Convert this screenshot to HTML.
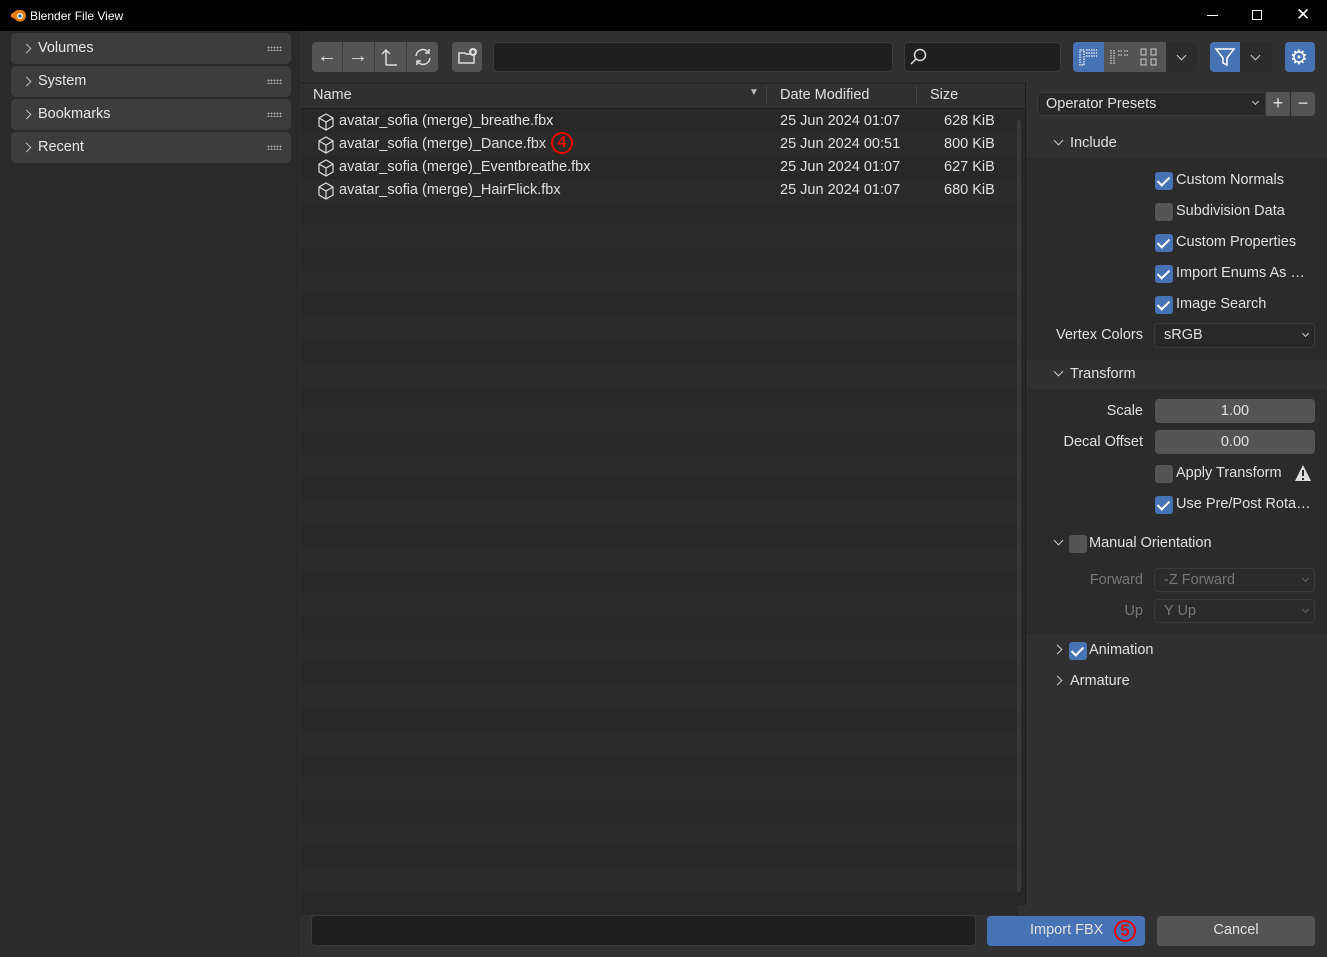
<!DOCTYPE html>
<html><head><meta charset="utf-8"><style>
*{box-sizing:border-box;margin:0;padding:0}
body{width:1327px;height:957px;background:#303030;font-family:"Liberation Sans","DejaVu Sans",sans-serif;font-size:14.5px;color:#e0e0e0;position:relative;overflow:hidden}
.a{position:absolute}
.title{left:0;top:0;width:1327px;height:31px;background:#000;color:#fff;font-size:12px}
.side{left:0;top:31px;width:300px;height:926px;background:#2a2a2a}
.si{left:11px;width:280px;height:31px;background:#3d3d3d;border-radius:5px;padding-left:27px;line-height:31px;color:#e6e6e6}
.si:before{content:"";position:absolute;left:12px;top:12px;width:6px;height:6px;border-right:1.3px solid #bbb;border-top:1.3px solid #bbb;transform:rotate(45deg)}
.dots{position:absolute;right:9px;top:13px;width:15px;height:5px;background-image:radial-gradient(#aaa 0.8px,transparent 0.9px);background-size:3px 3px}
.btn{background:#545454;border-radius:4px}
.row{left:301px;width:717px;height:23px}
.cb{width:18px;height:18px;border-radius:3px;background:#545454}
.cb.on{background:#4772b3}
.cb.on:after{content:"";position:absolute;left:5px;top:2px;width:5px;height:10px;border-right:2px solid #fff;border-bottom:2px solid #fff;transform:rotate(45deg)}
.rl{text-align:right;width:120px;left:1023px}
.fld{background:#282828;border:1px solid #3a3a3a;border-radius:4px}
.num{background:#545454;border-radius:4px;text-align:center;line-height:24px}
.chev{width:7px;height:7px;border-right:1.3px solid #ccc;border-bottom:1.3px solid #ccc;transform:rotate(45deg)}
.chr{width:7px;height:7px;border-right:1.3px solid #ccc;border-top:1.3px solid #ccc;transform:rotate(45deg)}
</style></head><body>
<div class="a title">
 <svg class="a" style="left:10px;top:8px" width="16" height="14" viewBox="0 0 16 14"><path d="M1 6 L7 2 L12 2 A6 6 0 1 1 5 11 L1 9 Z" fill="#e87d0d"/><circle cx="10" cy="8" r="3" fill="#fff"/><circle cx="10" cy="8" r="1.6" fill="#265787"/></svg>
 <span class="a" style="left:30px;top:9px">Blender File View</span>
 <div class="a" style="left:1207px;top:15px;width:11px;height:1px;background:#fff"></div>
 <div class="a" style="left:1252px;top:10px;width:10px;height:10px;border:1px solid #fff"></div>
 <span class="a" style="left:1296px;top:5px;font-size:17px">✕</span>
</div>
<div class="a side"></div>
<div class="a si" style="top:33px">Volumes<div class="dots"></div></div>
<div class="a si" style="top:66px">System<div class="dots"></div></div>
<div class="a si" style="top:99px">Bookmarks<div class="dots"></div></div>
<div class="a si" style="top:132px">Recent<div class="dots"></div></div>

<div class="a btn" style="left:312px;top:42px;width:126px;height:30px"></div>
<div class="a" style="left:342px;top:42px;width:1px;height:30px;background:#3a3a3a"></div>
<div class="a" style="left:374px;top:42px;width:1px;height:30px;background:#3a3a3a"></div>
<div class="a" style="left:406px;top:42px;width:1px;height:30px;background:#3a3a3a"></div>
<span class="a" style="left:317px;top:45px;font-size:20px;color:#ddd">←</span>
<span class="a" style="left:348px;top:45px;font-size:20px;color:#ddd">→</span>
<svg class="a" style="left:381px;top:47px" width="18" height="20"><path d="M5 18V3M1 7L5 3L9 7M5 18H16" fill="none" stroke="#ddd" stroke-width="1.5"/></svg>
<svg class="a" style="left:413px;top:47px" width="20" height="20"><path d="M3 9A7 7 0 0 1 16 6M17 11A7 7 0 0 1 4 14M16 2V6H12M4 18V14H8" fill="none" stroke="#ddd" stroke-width="1.5"/></svg>
<div class="a btn" style="left:452px;top:42px;width:30px;height:30px"></div>
<svg class="a" style="left:457px;top:46px" width="22" height="20"><path d="M2 7H8L9 8H17V17H2Z" fill="none" stroke="#ddd" stroke-width="1.5"/><circle cx="16" cy="6" r="4" fill="#ddd"/><path d="M16 4V8M14 6H18" stroke="#444" stroke-width="1.3"/></svg>
<div class="a fld" style="left:493px;top:42px;width:400px;height:30px;background:#1f1f1f"></div>
<div class="a fld" style="left:904px;top:42px;width:157px;height:30px;background:#1f1f1f"></div>
<svg class="a" style="left:909px;top:47px" width="20" height="20"><circle cx="11" cy="8" r="5.5" fill="none" stroke="#ddd" stroke-width="1.5"/><path d="M7 12L2 17" stroke="#ddd" stroke-width="1.5"/></svg>
<div class="a" style="left:1073px;top:42px;width:124px;height:30px;background:#545454;border-radius:4px"></div>
<div class="a" style="left:1073px;top:42px;width:31px;height:30px;background:#4772b3;border-radius:4px 0 0 4px"></div>
<div class="a" style="left:1166px;top:42px;width:31px;height:30px;background:#2c2c2c;border-radius:0 4px 4px 0"></div>
<svg class="a" style="left:1078px;top:47px" width="24" height="20"><path d="M2 3h4v15h-4zM8 3h11M8 6h11M8 9h11" fill="none" stroke="#fff" stroke-width="1.2" stroke-dasharray="1.5 1"/></svg>
<svg class="a" style="left:1108px;top:47px" width="24" height="20"><path d="M3 3v15M6 3v15M10 4h4M10 8h4M16 4h4M16 8h4" fill="none" stroke="#ccc" stroke-width="1.2" stroke-dasharray="1.5 1"/></svg>
<svg class="a" style="left:1139px;top:47px" width="22" height="20"><rect x="2" y="2" width="5" height="6" fill="none" stroke="#ccc"/><rect x="12" y="2" width="5" height="6" fill="none" stroke="#ccc"/><rect x="2" y="12" width="5" height="6" fill="none" stroke="#ccc"/><rect x="12" y="12" width="5" height="6" fill="none" stroke="#ccc"/></svg>
<div class="a chev" style="left:1178px;top:52px"></div>
<div class="a" style="left:1210px;top:42px;width:62px;height:30px;background:#2c2c2c;border-radius:4px"></div>
<div class="a" style="left:1210px;top:42px;width:30px;height:30px;background:#4772b3;border-radius:4px 0 0 4px"></div>
<svg class="a" style="left:1213px;top:46px" width="24" height="22"><path d="M3 3H21L14 12V19L10 17V12Z" fill="none" stroke="#fff" stroke-width="1.5"/></svg>
<div class="a chev" style="left:1252px;top:52px"></div>
<div class="a" style="left:1285px;top:42px;width:30px;height:30px;background:#4772b3;border-radius:4px"></div>
<span class="a" style="left:1290px;top:45px;font-size:20px;color:#fff">⚙</span>

<div class="a" style="left:301px;top:82px;width:725px;height:823px;background:#282828"></div>
<div class="a" style="left:301px;top:84px;width:725px;height:24px;background:#303030"></div>
<span class="a" style="left:313px;top:87px">Name</span>
<span class="a" style="left:749px;top:87px;font-size:10px;color:#bbb">▼</span>
<div class="a" style="left:766px;top:86px;width:1px;height:18px;background:#444"></div>
<span class="a" style="left:780px;top:87px">Date Modified</span>
<div class="a" style="left:916px;top:86px;width:1px;height:18px;background:#444"></div>
<span class="a" style="left:930px;top:87px">Size</span>
<div class="a" style="left:301px;top:108px;width:725px;height:1px;background:#1e1e1e"></div>
<div id="rows"></div>
<div class="a" style="left:1017px;top:120px;width:4px;height:772px;background:#3a3a3a;border-radius:2px"></div>
<div class="a" style="left:1025px;top:82px;width:1px;height:823px;background:#1e1e1e"></div>

<div class="a" style="left:1026px;top:82px;width:301px;height:823px;background:#303030"></div>
<div class="a fld" style="left:1037px;top:92px;width:229px;height:24px;line-height:22px;padding-left:8px;background:#282828">Operator Presets</div>
<div class="a chev" style="left:1253px;top:99px;width:5px;height:5px"></div>
<div class="a num" style="left:1266px;top:92px;width:24px;height:24px;font-size:18px;line-height:23px;border-radius:0">+</div>
<div class="a num" style="left:1291px;top:92px;width:24px;height:24px;font-size:18px;line-height:22px;border-radius:0 4px 4px 0">−</div>

<div class="a" style="left:1026px;top:158px;width:301px;height:202px;background:#2b2b2b"></div>
<div class="a chev" style="left:1055px;top:137px"></div><span class="a" style="left:1070px;top:135px">Include</span>
<div class="a cb on" style="left:1155px;top:172px"></div><span class="a" style="left:1176px;top:172px">Custom Normals</span>
<div class="a cb" style="left:1155px;top:203px"></div><span class="a" style="left:1176px;top:203px">Subdivision Data</span>
<div class="a cb on" style="left:1155px;top:234px"></div><span class="a" style="left:1176px;top:234px">Custom Properties</span>
<div class="a cb on" style="left:1155px;top:265px"></div><span class="a" style="left:1176px;top:265px">Import Enums As …</span>
<div class="a cb on" style="left:1155px;top:296px"></div><span class="a" style="left:1176px;top:296px">Image Search</span>
<span class="a rl" style="top:327px">Vertex Colors</span>
<div class="a fld" style="left:1154px;top:323px;width:161px;height:25px;line-height:23px;padding-left:9px">sRGB</div>
<div class="a chev" style="left:1303px;top:331px;width:5px;height:5px"></div>

<div class="a" style="left:1026px;top:389px;width:301px;height:245px;background:#2b2b2b"></div>
<div class="a chev" style="left:1055px;top:368px"></div><span class="a" style="left:1070px;top:366px">Transform</span>
<span class="a rl" style="top:403px">Scale</span>
<div class="a num" style="left:1155px;top:399px;width:160px;height:24px">1.00</div>
<span class="a rl" style="top:434px">Decal Offset</span>
<div class="a num" style="left:1155px;top:430px;width:160px;height:24px">0.00</div>
<div class="a cb" style="left:1155px;top:465px"></div><span class="a" style="left:1176px;top:465px">Apply Transform</span>
<svg class="a" style="left:1294px;top:464px" width="18" height="18"><path d="M9 1L17 17H1Z" fill="#ddd"/><path d="M9 6V12M9 14V16" stroke="#2b2b2b" stroke-width="2"/></svg>
<div class="a cb on" style="left:1155px;top:496px"></div><span class="a" style="left:1176px;top:496px">Use Pre/Post Rota…</span>
<div class="a chev" style="left:1055px;top:537px"></div>
<div class="a cb" style="left:1069px;top:535px"></div><span class="a" style="left:1089px;top:535px">Manual Orientation</span>
<span class="a rl" style="top:572px;color:#777">Forward</span>
<div class="a fld" style="left:1154px;top:568px;width:161px;height:24px;line-height:22px;padding-left:9px;color:#777;background:#2b2b2b">-Z Forward</div>
<div class="a chev" style="left:1303px;top:576px;width:5px;height:5px;border-color:#666"></div>
<span class="a rl" style="top:603px;color:#777">Up</span>
<div class="a fld" style="left:1154px;top:599px;width:161px;height:24px;line-height:22px;padding-left:9px;color:#777;background:#2b2b2b">Y Up</div>
<div class="a chev" style="left:1303px;top:607px;width:5px;height:5px;border-color:#666"></div>
<div class="a chr" style="left:1054px;top:646px"></div>
<div class="a cb on" style="left:1069px;top:642px"></div><span class="a" style="left:1089px;top:642px">Animation</span>
<div class="a chr" style="left:1054px;top:677px"></div><span class="a" style="left:1070px;top:673px">Armature</span>

<div class="a fld" style="left:311px;top:915px;width:665px;height:31px;background:#1f1f1f"></div>
<div class="a" style="left:987px;top:916px;width:158px;height:30px;background:#4772b3;border-radius:4px;line-height:29px;padding-left:43px">Import FBX</div>
<div class="a" style="left:1114px;top:920px;width:22px;height:22px;border:2px solid #e00;border-radius:50%;color:#e00;font-weight:bold;font-size:17px;text-align:center;line-height:18px">5</div>
<div class="a num" style="left:1157px;top:916px;width:158px;height:30px;line-height:29px">Cancel</div>
<script>
var r=document.getElementById('rows'),h='',f=[["avatar_sofia (merge)_breathe.fbx","25 Jun 2024 01:07","628 KiB"],["avatar_sofia (merge)_Dance.fbx","25 Jun 2024 00:51","800 KiB"],["avatar_sofia (merge)_Eventbreathe.fbx","25 Jun 2024 01:07","627 KiB"],["avatar_sofia (merge)_HairFlick.fbx","25 Jun 2024 01:07","680 KiB"]];
for(var i=0;i<35;i++){var y=110+i*23;h+='<div class="a row" style="top:'+y+'px;background:'+(i%2?'#2b2b2b':'#282828')+'"></div>';
if(i<4){h+='<svg class="a" style="left:317px;top:'+(y+3)+'px" width="18" height="18"><path d="M9 1L16 5V13L9 17L2 13V5ZM2 5L9 9L16 5M9 9V17" fill="none" stroke="#ddd" stroke-width="1.2"/></svg><span class="a" style="left:339px;top:'+(y+3)+'px">'+f[i][0]+'</span><span class="a" style="left:780px;top:'+(y+3)+'px">'+f[i][1]+'</span><span class="a" style="left:944px;top:'+(y+3)+'px">'+f[i][2]+'</span>';}}
h+='<div class="a" style="left:551px;top:132px;width:22px;height:22px;border:2px solid #e00;border-radius:50%;color:#e00;font-weight:bold;font-size:16px;text-align:center;line-height:18px">4</div>';
r.innerHTML=h;
</script>
</body></html>
